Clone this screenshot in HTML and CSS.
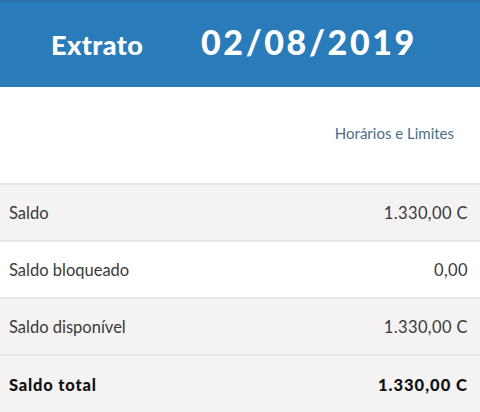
FILE: index.html
```html
<!DOCTYPE html>
<html lang="pt">
<head>
<meta charset="utf-8">
<title>Extrato</title>
<link rel="stylesheet" href="styles.css">
</head>
<body>
<header class="topbar">
  <h1 class="title">Extrato</h1>
  <div class="date">02/08/2019</div>
</header>
<div class="links">
  <a class="link" href="#">Horários e Limites</a>
</div>
<ul class="rows">
  <li class="row grey"><span>Saldo</span><span>1.330,00 C</span></li>
  <li class="row"><span>Saldo bloqueado</span><span>0,00</span></li>
  <li class="row grey"><span>Saldo disponível</span><span>1.330,00 C</span></li>
  <li class="row grey total"><span>Saldo total</span><span>1.330,00 C</span></li>
</ul>
</body>
</html>
```
FILE: styles.css
```css
* { box-sizing: border-box; }
html, body { margin: 0; padding: 0; }
body {
  width: 480px;
  height: 412px;
  overflow: hidden;
  background: #ffffff;
  font-family: Lato, "Noto Sans", sans-serif;
  color: #3a3a3a;
}
.topbar {
  height: 87px;
  background: #2a7bb9;
  border-top: 2px solid #2670ab;
  display: flex;
  align-items: center;
  padding: 0 0 4px 51px;
  color: #ffffff;
}
.title {
  margin: 0;
  font-size: 27px;
  font-weight: 900;
  letter-spacing: 0.4px;
  width: 150px;
  padding-top: 4px;
}
.date {
  font-size: 34px;
  font-weight: 900;
  letter-spacing: 2.6px;
  margin-top: -2px;
}
.links {
  height: 98px;
  display: flex;
  justify-content: flex-end;
  align-items: flex-start;
  padding: 37px 26px 0 0;
  border-bottom: 2px solid #e9e6e7;
}
.link {
  color: #4a7088;
  font-size: 15px;
  text-decoration: none;
}
.rows {
  list-style: none;
  margin: 0;
  padding: 0;
}
.row {
  height: 57px;
  display: flex;
  justify-content: space-between;
  align-items: center;
  padding: 0 12px 0 9px;
  font-size: 16.5px;
  border-bottom: 2px solid #e9e6e7;
  background: #ffffff;
}
.row span:last-child { letter-spacing: 0.4px; }
.row.grey { background: #f4f2f3; }
.row.total {
  font-weight: 900;
  letter-spacing: 0.8px;
  color: #111111;
  border-bottom: none;
}
.row.total span:last-child { letter-spacing: 1px; }
```
